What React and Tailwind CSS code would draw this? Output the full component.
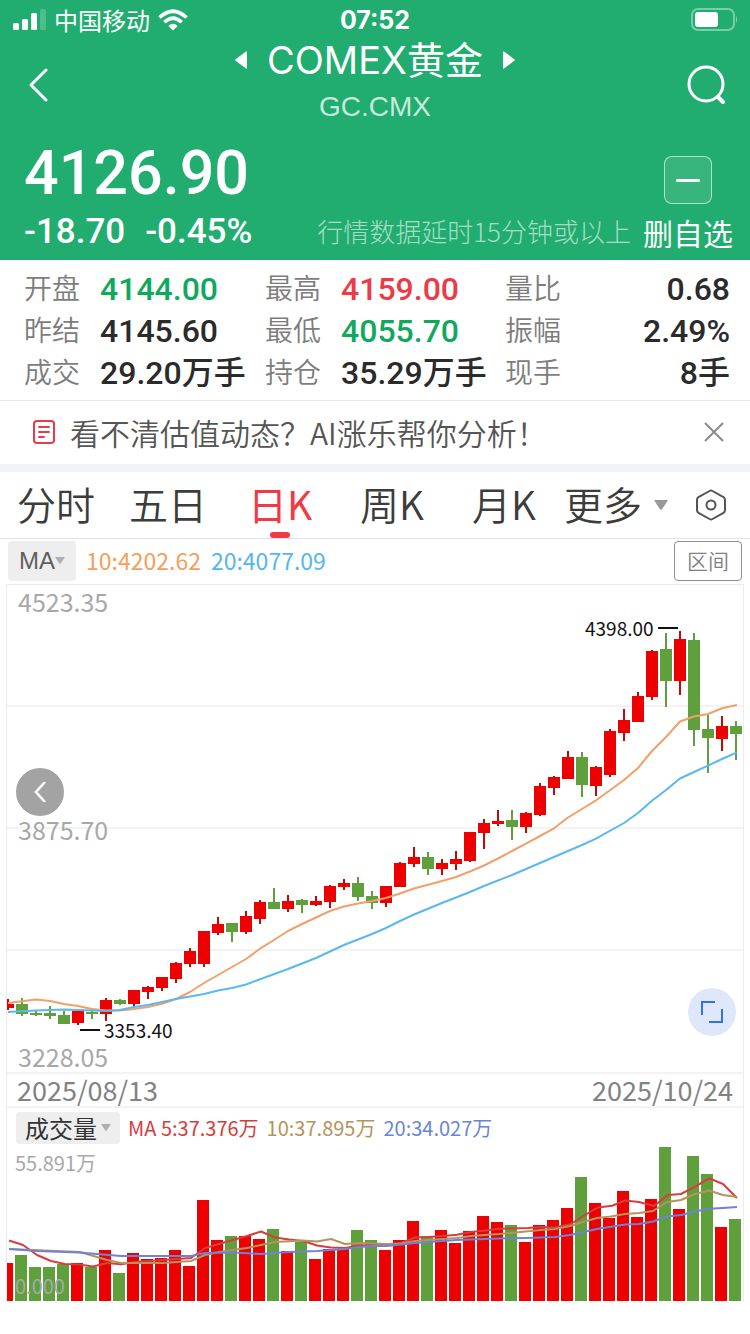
import React, { useState } from "react";

const RED = "#ec0000";
const GREEN = "#5fa03c";

const STATS = [
  { label: "开盘", value: "4144.00", color: "text-[#0fa95e]" },
  { label: "最高", value: "4159.00", color: "text-[#ee3a46]" },
  { label: "量比", value: "0.68", color: "text-[#2b2b2b]" },
  { label: "昨结", value: "4145.60", color: "text-[#2b2b2b]" },
  { label: "最低", value: "4055.70", color: "text-[#0fa95e]" },
  { label: "振幅", value: "2.49%", color: "text-[#2b2b2b]" },
  { label: "成交", value: "29.20万手", color: "text-[#2b2b2b]" },
  { label: "持仓", value: "35.29万手", color: "text-[#2b2b2b]" },
  { label: "现手", value: "8手", color: "text-[#2b2b2b]" },
];

const TABS = ["分时", "五日", "日K", "周K", "月K"];

// [body top, body bottom, wick top, wick bottom, up?, volume top]
const CANDLES = [
  [1004, 1008, 999, 1010, 1, 1263],
  [1004, 1014, 998, 1016, 0, 1255],
  [1013, 1015, 1010, 1016, 0, 1267],
  [1013, 1016, 1006, 1019, 0, 1267],
  [1015, 1024, 1011, 1024, 0, 1264],
  [1011, 1023, 1011, 1025, 1, 1263],
  [1012, 1014, 1010, 1019, 0, 1267],
  [1000, 1014, 998, 1021, 1, 1250],
  [1000, 1004, 999, 1005, 0, 1273],
  [990, 1004, 990, 1007, 1, 1253],
  [987, 992, 986, 999, 1, 1259],
  [977, 988, 977, 991, 1, 1258],
  [963, 979, 962, 983, 1, 1250],
  [951, 964, 948, 967, 1, 1266],
  [931, 964, 931, 967, 1, 1200],
  [924, 933, 917, 935, 1, 1240],
  [923, 932, 923, 942, 0, 1236],
  [916, 932, 911, 934, 1, 1236],
  [902, 919, 900, 924, 1, 1239],
  [902, 909, 888, 909, 0, 1229],
  [901, 909, 895, 912, 1, 1251],
  [900, 905, 899, 913, 0, 1242],
  [901, 905, 896, 906, 1, 1259],
  [886, 902, 885, 908, 1, 1249],
  [883, 887, 879, 890, 1, 1249],
  [883, 897, 877, 901, 0, 1230],
  [896, 903, 891, 909, 0, 1240],
  [886, 903, 886, 907, 1, 1250],
  [863, 887, 862, 887, 1, 1240],
  [857, 864, 847, 867, 1, 1221],
  [857, 869, 852, 875, 0, 1236],
  [863, 869, 859, 875, 1, 1230],
  [859, 864, 851, 870, 1, 1243],
  [832, 861, 832, 862, 1, 1231],
  [823, 833, 819, 849, 1, 1216],
  [821, 824, 810, 826, 1, 1222],
  [820, 827, 810, 840, 0, 1225],
  [813, 827, 812, 833, 1, 1242],
  [786, 815, 783, 816, 1, 1225],
  [777, 788, 776, 795, 1, 1220],
  [757, 779, 751, 779, 1, 1208],
  [757, 785, 752, 797, 0, 1177],
  [767, 786, 766, 796, 1, 1203],
  [731, 775, 729, 777, 1, 1218],
  [720, 733, 709, 741, 1, 1191],
  [696, 722, 692, 722, 1, 1217],
  [651, 697, 650, 700, 1, 1199],
  [649, 681, 633, 707, 0, 1147],
  [639, 681, 631, 695, 1, 1209],
  [640, 730, 633, 746, 0, 1156],
  [729, 738, 715, 773, 0, 1174],
  [726, 739, 716, 751, 1, 1227],
  [726, 734, 721, 760, 0, 1219],
];

const PRICE_LINES = [
  {
    name: "MA10",
    color: "#f29f68",
    points:
      "8,1003 36,999.5 50,1001 64,1004 78,1006 92,1009 106,1010.5 120,1010.5 134,1009 148,1007 162,1003.7 176,999 190,992 204,983 218,975 232,967 246,959 260,948.7 274,940 288,931 302,924 316,917.5 330,911 344,906.5 358,903.5 372,901 386,898 400,893.5 414,888.5 428,884.7 442,881 456,877 470,871.5 484,865.5 498,858.5 512,851 526,843.7 540,836 554,828.3 568,817.5 582,809 596,800.3 610,790.3 624,780 638,768 652,751 666,737 680,721.5 694,716.5 708,714 722,708.3 737,705",
  },
  {
    name: "MA20",
    color: "#5bb8ee",
    points:
      "8,1012 36,1010.5 64,1009.5 92,1010.5 106,1011 120,1010 134,1007 148,1005 176,999 204,994 218,990.5 232,988 246,984.5 258,980 288,969 316,958 344,945 372,934 386,928 400,921 414,914.5 442,903 470,892 484,886 512,875 526,869 540,863 554,857 568,851 582,845 596,838.7 624,823 638,813 652,800.7 666,790 680,778.5 694,772 708,765.7 722,759 737,752.3",
  },
];

const VOLUME_LINES = [
  {
    name: "MA5",
    color: "#d93c3c",
    points:
      "9,1240.5 23,1245 37,1255 51,1261 65,1264 79,1264.5 93,1266.5 107,1263 121,1264.3 135,1262 149,1261 163,1260 177,1259 191,1258 205,1248 219,1244 233,1240 247,1236 261,1231.5 275,1237.5 289,1239.5 303,1241 317,1245.5 331,1247.5 345,1248 359,1245.5 373,1245 387,1244.5 401,1243 415,1237.5 429,1237 443,1236 457,1234.7 471,1232 485,1230.5 499,1228.7 528,1228 541,1227 555,1227.5 571,1224 583,1216 598,1207.5 612,1205.7 625,1200.5 639,1202 654,1206 668,1195 681,1194 695,1186.7 709,1178.3 723,1184 737,1198",
  },
  {
    name: "MA10",
    color: "#b5935c",
    points:
      "9,1249 80,1252 107,1260 121,1263 163,1263 191,1261 205,1255 219,1252 247,1248 275,1242 303,1240.5 317,1241.5 331,1239 345,1244 359,1243 387,1244 401,1243.5 415,1241 457,1238 471,1236 485,1235 499,1234 541,1230 555,1229 570,1226 583,1222 597,1218 611,1216.5 625,1214 639,1213 653,1211 667,1202 681,1200 695,1194 709,1190.5 723,1195 737,1197",
  },
  {
    name: "MA20",
    color: "#6f82d8",
    points:
      "9,1249 37,1251 79,1252.5 121,1256 191,1256 205,1253 233,1252.5 261,1254 289,1252 317,1251 345,1249 359,1247 373,1246 387,1246 415,1243 429,1242 457,1240 499,1238.5 527,1238 555,1237 570,1235 597,1229 625,1224.5 639,1224 653,1221.5 667,1216.5 681,1215 695,1211.5 709,1208.7 723,1208 737,1207",
  },
];

const Caret = ({ className }) => (
  <svg viewBox="0 0 14 10" className={className} aria-hidden="true">
    <path d="M1 0h12q1 0 .5 1L8 9.200q-1 1-2 0L.5 1Q0 0 1 0z" fill="currentColor" />
  </svg>
);

const StatusBar = () => (
  <div className="grid h-10 grid-cols-3 items-center px-3">
    <div className="flex items-center gap-2">
      <svg viewBox="0 0 34 22" className="h-[22px] w-[34px]" fill="#fff" aria-hidden="true">
        <rect x="1" y="14" width="6" height="7" rx="1.500" />
        <rect x="10" y="10" width="6" height="11" rx="1.500" />
        <rect x="19" y="4" width="6" height="17" rx="1.500" />
        <rect x="28" y="0" width="6" height="21" rx="1.500" opacity=".2" />
      </svg>
      <span className="text-[24px] leading-7 whitespace-nowrap">中国移动</span>
      <svg viewBox="0 0 30 22" className="h-[22px] w-[30px]" fill="none" stroke="#fff" strokeWidth="3.600" aria-hidden="true">
        <path d="M1.500 8.500Q15-4 28.500 8.500" />
        <path d="M6.300 13.300Q15 5 23.700 13.300" />
        <path d="M15 21.500l-4.600-4.600Q15 12.800 19.600 16.900z" fill="#fff" stroke="none" />
      </svg>
    </div>
    <span className="text-center font-['Inter',sans-serif] text-[25px] leading-7 font-bold">07:52</span>
    <svg viewBox="0 0 48 24" className="h-6 w-12 justify-self-end" aria-hidden="true">
      <rect x="2" y="1" width="42" height="21" rx="6" fill="none" stroke="#fff" strokeOpacity=".4" strokeWidth="2" />
      <rect x="5" y="4" width="23" height="15" rx="3" fill="#fff" />
      <path d="M46 8q2 3.500 0 7z" fill="#fff" opacity=".5" />
    </svg>
  </div>
);

const Header = () => (
  <header className="bg-[#21ad6f] text-white">
    <StatusBar />
    <div className="flex h-[90px] items-center justify-between px-5">
      <button type="button" aria-label="返回" className="w-14 pl-1">
        <svg viewBox="0 0 24 34" className="h-[34px] w-6" fill="none" stroke="currentColor" strokeWidth="3" strokeLinecap="round" strokeLinejoin="round">
          <path d="M22 2L7 17l15 15" />
        </svg>
      </button>
      <div className="flex flex-col items-center">
        <div className="flex items-center gap-5">
          <button type="button" aria-label="上一个">
            <svg viewBox="0 0 12 18" className="h-[18px] w-3" fill="currentColor">
              <path d="M12 1v16q0 1-1 .4L.6 9.800q-.8-.8 0-1.600L11 .6q1-.6 1 .4z" />
            </svg>
          </button>
          <h1 className="font-['Inter','Noto_Sans_CJK_SC',sans-serif] text-[38px] leading-[44px] whitespace-nowrap">COMEX黄金</h1>
          <button type="button" aria-label="下一个">
            <svg viewBox="0 0 12 18" className="h-[18px] w-3" fill="currentColor">
              <path d="M0 1v16q0 1 1 .4L11.400 9.800q.8-.8 0-1.600L1 .6Q0 0 0 1z" />
            </svg>
          </button>
        </div>
        <p className="font-['Liberation_Sans',sans-serif] text-[28px] leading-[50px] text-white/75">GC.CMX</p>
      </div>
      <button type="button" aria-label="搜索" className="flex w-14 justify-end">
        <svg viewBox="0 0 44 44" className="size-11" fill="none" stroke="currentColor" strokeWidth="3" strokeLinecap="round">
          <circle cx="20" cy="21" r="17" />
          <path d="M32 34l5 5" strokeWidth="4" />
        </svg>
      </button>
    </div>
    <div className="flex h-[130px] justify-between pr-[17px] pl-6">
      <div className="flex flex-col pt-1.5 font-['Roboto',sans-serif] font-medium">
        <span className="text-[61px] leading-[74px]">4126.90</span>
        <div className="flex gap-5 text-[35px] leading-[44px]">
          <span>-18.70</span>
          <span>-0.45%</span>
        </div>
      </div>
      <div className="flex items-end gap-3">
        <p className="pb-2 text-[26px] leading-[42px] font-light whitespace-nowrap text-white/60">行情数据延时15分钟或以上</p>
        <button type="button" className="flex flex-col items-center gap-1.5 pb-1.5 whitespace-nowrap">
          <span className="flex size-12 items-center justify-center rounded-lg border border-white/60 bg-white/10">
            <span className="h-[3px] w-6 rounded-full bg-white" />
          </span>
          <span className="text-[30px] leading-[44px]">删自选</span>
        </button>
      </div>
    </div>
  </header>
);

const StatsPanel = () => (
  <dl className="grid grid-cols-[241fr_240fr_225fr] pt-2 pr-5 pb-1.5 pl-6">
    {STATS.map((item, idx) => (
      <div key={item.label} className="flex h-[42px] items-start whitespace-nowrap">
        <dt className="w-[76px] shrink-0 text-[28px] leading-[38px] font-[350] text-[#7d7d7d]">{item.label}</dt>
        <dd
          className={`font-['Roboto','Noto_Sans_CJK_SC',sans-serif] text-[32px] leading-[42px] font-medium ${item.color} ${
            idx % 3 === 2 ? "ml-auto" : ""
          }`}
        >
          {item.value}
        </dd>
      </div>
    ))}
  </dl>
);

const Banner = () => (
  <div className="flex h-16 items-center border-t border-[#e6e6e6] pr-6 pb-0.5 pl-8">
    <svg viewBox="0 0 24 26" className="h-[26px] w-6" fill="none" stroke="#e83a4b" strokeWidth="2" strokeLinecap="round" aria-hidden="true">
      <rect x="2" y="2" width="20" height="22" rx="3" />
      <path d="M7 8h10M7 13h10M7 18h5" />
    </svg>
    <a href="#analysis" className="ml-3.5 text-[30px] leading-[42px] font-[350] text-[#555]">
      看不清估值动态？AI涨乐帮你分析！
    </a>
    <button type="button" aria-label="关闭" className="ml-auto text-[#8a8a8a]">
      <svg viewBox="0 0 24 24" className="size-6" fill="none" stroke="currentColor" strokeWidth="2">
        <path d="M3 3l18 18M21 3L3 21" />
      </svg>
    </button>
  </div>
);

const PeriodTabs = () => {
  const [active, setActive] = useState("日K");

  return (
    <nav className="flex h-[67px] border-b border-[#e2e2e2] text-[39px] leading-[60px] font-[350] whitespace-nowrap text-[#3c3c3c]">
      {TABS.map((tab) => (
        <button
          key={tab}
          type="button"
          onClick={() => setActive(tab)}
          className={`relative flex-1 pb-1 ${tab === active ? "font-normal text-[#f23a46]" : ""}`}
        >
          {tab}
          {tab === active && (
            <span className="absolute bottom-0 left-1/2 h-1.5 w-5 -translate-x-1/2 rounded-full bg-[#f23a46]" />
          )}
        </button>
      ))}
      <button type="button" className="flex w-28 items-center justify-center gap-3 pb-1">
        更多
        <Caret className="mt-1 h-2.5 w-3.5 text-[#999]" />
      </button>
      <button type="button" aria-label="设置" className="flex w-[78px] items-center justify-center">
        <svg viewBox="0 0 32 34" className="h-[34px] w-8" fill="none" stroke="#555" strokeWidth="2">
          <path d="M14.500 3q1.500-.9 3 0l11 6.200q1.500.9 1.500 2.600v10.400q0 1.700-1.500 2.600l-11 6.200q-1.500.9-3 0l-11-6.200Q2 23.900 2 22.200V11.800Q2 10.100 3.500 9.200z" />
          <circle cx="16" cy="17" r="4.500" />
        </svg>
      </button>
    </nav>
  );
};

const Lines = ({ lines }) =>
  lines.map((line) => (
    <polyline key={line.name} points={line.points} fill="none" stroke={line.color} strokeWidth="2" strokeLinejoin="round" />
  ));

const PriceChart = () => (
  <div className="relative">
    <svg viewBox="7 585 736 487" className="block w-full" role="img" aria-label="日K线">
      {[706, 828, 950].map((y) => (
        <path key={y} d={`M7 ${y}H743`} stroke="#f3f3f3" strokeWidth="2" />
      ))}
      {CANDLES.map(([top, bottom, high, low, up], i) => {
        const x = 8 + i * 14;
        return (
          <g key={i} fill={up ? RED : GREEN}>
            <rect x={x - 1} y={high} width="2" height={low - high} fill={up ? "#c40808" : GREEN} />
            <rect x={x - 6} y={top} width="12" height={bottom - top} />
          </g>
        );
      })}
      <Lines lines={PRICE_LINES} />
      <path d="M658 628h20M80 1030h20" stroke="#111" strokeWidth="2" />
      <g className="text-[19px]" fill="#111">
        <text x="585" y="636">4398.00</text>
        <text x="104" y="1038">3353.40</text>
      </g>
    </svg>
    <div className="pointer-events-none absolute inset-0 flex flex-col justify-between pl-[11px] text-[25px] leading-8 text-[#a8a8a8]">
      <span>4523.35</span>
      <span>3875.70</span>
      <span>3228.05</span>
    </div>
    <button
      type="button"
      aria-label="向左"
      className="absolute top-[183px] left-[9px] flex size-12 items-center justify-center rounded-full bg-[#a3a3a3] text-white"
    >
      <svg viewBox="0 0 12 20" className="h-5 w-3" fill="none" stroke="currentColor" strokeWidth="2.500">
        <path d="M11 0L2 10l9 10" />
      </svg>
    </button>
    <button
      type="button"
      aria-label="全屏"
      className="absolute right-[7px] bottom-9 flex size-12 items-center justify-center rounded-full bg-[#dfe8fb]"
    >
      <svg viewBox="0 0 22 22" className="size-[22px]" fill="none" stroke="#3572e8" strokeWidth="2">
        <path d="M1 14V1h13M21 8v13H8" />
      </svg>
    </button>
  </div>
);

const VolumeChart = () => (
  <div className="relative text-[20px] leading-7 text-[#a8a8a8]">
    <svg viewBox="7 1145 736 157" className="block w-full" role="img" aria-label="成交量">
      {CANDLES.map((candle, i) => (
        <rect key={i} x={1 + i * 14} y={candle[5]} width="12" height={1301 - candle[5]} fill={candle[4] ? RED : GREEN} />
      ))}
      <Lines lines={VOLUME_LINES} />
    </svg>
    <span className="absolute top-1 left-2">55.891万</span>
    <span className="absolute bottom-0.5 left-2">0.000</span>
  </div>
);

export default function App() {
  return (
    <div className="min-h-screen bg-white font-['Noto_Sans_CJK_SC',sans-serif]">
      <Header />
      <StatsPanel />
      <Banner />
      <div className="h-2 bg-[#f2f3f7]" />
      <PeriodTabs />

      <div className="flex h-[45px] items-center gap-2.5 px-2 pb-0.5 text-[23px]">
        <button
          type="button"
          className="flex h-10 w-[68px] items-center justify-center rounded bg-[#eeeeee] font-['Liberation_Sans',sans-serif] text-[24px] text-[#5f5f5f]"
        >
          MA
          <Caret className="h-[7px] w-2.5 text-[#b0b0b0]" />
        </button>
        <span className="text-[#f29f5e]">10:4202.62</span>
        <span className="text-[#55b6ee]">20:4077.09</span>
        <button
          type="button"
          className="ml-auto h-10 w-[68px] rounded border border-[#8d8d8d] text-[21px] font-[350] text-[#808080]"
        >
          区间
        </button>
      </div>

      <div className="mx-1.5 border-x border-t border-[#ececec]">
        <PriceChart />
        <div className="flex h-9 items-center justify-between border-y-2 border-[#f3f3f3] px-2.5 text-[27px] text-[#828282]">
          <time>2025/08/13</time>
          <time>2025/10/24</time>
        </div>
        <div className="flex h-[37px] items-center gap-2 pt-0.5 pl-[9px] text-[20px] leading-8 whitespace-nowrap">
          <button
            type="button"
            className="flex h-8 w-[104px] items-center justify-center gap-1 rounded bg-[#eeeeee] text-[24px] text-[#333]"
          >
            成交量
            <Caret className="h-[7px] w-2.5 text-[#b0b0b0]" />
          </button>
          <span className="text-[#d93c3c]">MA 5:37.376万</span>
          <span className="text-[#b5935c]">10:37.895万</span>
          <span className="text-[#6a84dc]">20:34.027万</span>
        </div>
        <VolumeChart />
      </div>
    </div>
  );
}
